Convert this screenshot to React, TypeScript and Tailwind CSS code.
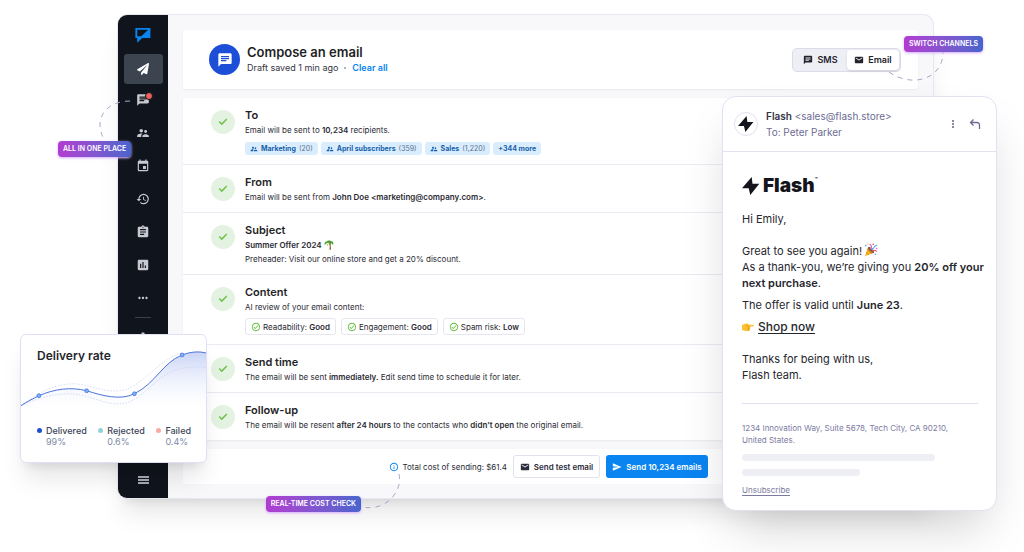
import type { ReactNode } from 'react'
import { Check } from 'lucide-react'
import { FaPaperPlane } from 'react-icons/fa'
import {
  MdAssessment,
  MdAssignment,
  MdChat,
  MdEmail,
  MdEvent,
  MdHistory,
  MdMoreHoriz,
  MdMoreVert,
  MdOutlineCheckCircle,
  MdOutlineInfo,
  MdSend,
  MdSettings,
  MdSupervisorAccount,
} from 'react-icons/md'

const navItems = [
  { label: 'Chats', icon: MdChat, hasDot: true },
  { label: 'Contacts', icon: MdSupervisorAccount },
  { label: 'Calendar', icon: MdEvent },
  { label: 'History', icon: MdHistory },
  { label: 'Templates', icon: MdAssignment },
  { label: 'Reports', icon: MdAssessment },
  { label: 'More', icon: MdMoreHoriz },
]

const recipients = [
  { name: 'Marketing', count: '20' },
  { name: 'April subscribers', count: '359' },
  { name: 'Sales', count: '1,220' },
]

const reviewChecks = [
  { label: 'Readability', value: 'Good' },
  { label: 'Engagement', value: 'Good' },
  { label: 'Spam risk', value: 'Low' },
]

const rates = [
  { label: 'Delivered', value: '99%', dot: 'bg-[#1d4ed8]' },
  { label: 'Rejected', value: '0.6%', dot: 'bg-[#94d3d3]' },
  { label: 'Failed', value: '0.4%', dot: 'bg-[#f9aaa5]' },
]

const ratePoints = [
  [18, 49],
  [66, 44],
  [114, 47],
  [162, 8],
]

const BrandLogo = () => (
  <svg viewBox="0 0 16 16" className="h-4 w-4" aria-hidden="true">
    <path d="M.4 1h15v10H7.2l-5 4.8V11H.4z" fill="#0a84f0" />
    <path d="M2.3 2.8h10.9L6.3 9.3h-4z" fill="#10141d" />
  </svg>
)

const Bolt = ({ className }: { className: string }) => (
  <svg viewBox="0 0 18 18" className={className} aria-hidden="true">
    <path d="M9.7 0 0 11.3h6.7L8.3 18l9-11.3h-6.8z" fill="#14141c" />
  </svg>
)

const PalmIcon = () => (
  <svg viewBox="0 0 16 16" className="h-2.5 w-2.5" aria-hidden="true">
    <path d="M8 5c1 3 1.4 6 .8 10.5h2.4C11.5 11 10.500 8 9.200 5z" fill="#a0622d" />
    <path
      d="M8.500 5C6 3.500 3 4.500 1.500 8.500 0 5.500 2 2.500 4.500 2.500 5.500.5 10 0 11.500 2c2.500 0 4.500 2.500 3 6C13 5.500 12 5 10.500 5c1.200 1.500 1 3 .5 4.500C10 7.500 9.500 6 8.500 5 7 6 6 7.500 5.500 10 4.500 8 5.500 6 8.500 5z"
      fill="#4c9a2a"
    />
  </svg>
)

const PartyIcon = () => (
  <svg viewBox="0 0 16 16" className="h-3.5 w-3.5 self-start" aria-hidden="true">
    <path d="M4.600 4.800 1 15l10.200-3.800z" fill="#fbb829" />
    <path d="m3.600 8 4.600 4.500 1.500-.6-5.600-5.600zM2.200 11.500l2.800 2.300 1.200-.4-3.600-3z" fill="#e08a1b" />
    <ellipse cx="8" cy="8" rx="1.7" ry="4.6" transform="rotate(-45 8 8)" fill="#8a5a3b" />
    <g fill="none" strokeWidth="1.2" strokeLinecap="round">
      <path d="M7.500 6.500C9 5 8.500 3 7 1.500" stroke="#d956c2" />
      <path d="M9 7.500c1-2 2-1 2.500-2.500S13 3 14.500 2.500" stroke="#4da3f5" />
      <path d="M9.500 9c1.500-1.200 3-1 5 .5" stroke="#e8475c" />
    </g>
    <circle cx="2" cy="3" r=".9" fill="#4da3f5" />
    <circle cx="10.5" cy="1.5" r=".9" fill="#e8475c" />
    <circle cx="4.5" cy="1.3" r=".7" fill="#fbb829" />
    <circle cx="14.6" cy="6.2" r=".8" fill="#d956c2" />
    <circle cx="13" cy="12.8" r=".9" fill="#4da3f5" />
  </svg>
)

const PointIcon = () => (
  <svg viewBox="0 0 16 16" className="h-3 w-3" aria-hidden="true">
    <path
      d="M0 5.500C2 4 4.500 3 7.500 3.200c1 .1 1.300 1 .8 1.800h6.500c1.600 0 1.600 2.300 0 2.300h-4.300c1 .5 1 1.800.1 2.200.7.6.6 1.600-.3 2 .4.9-.2 1.700-1.300 1.700H5C3 13.200 1.500 12.500 0 12z"
      fill="#fdc02f"
    />
    <path
      d="M10.400 7.400H7M10.500 9.600H7.300M10.200 11.500H7.500M8.300 5 6 6.200"
      stroke="#d98c1a"
      strokeWidth=".8"
      fill="none"
    />
  </svg>
)

const Callout = ({ children }: { children: ReactNode }) => (
  <span className="flex h-4 items-center justify-center rounded bg-gradient-to-r from-[#b13bd1] to-[#4664cd] px-[5px] text-[7px] font-semibold whitespace-nowrap text-white shadow-sm shadow-purple-300">
    {children}
  </span>
)

const Connector = ({ d, className, viewBox }: { d: string; className: string; viewBox: string }) => (
  <svg viewBox={viewBox} className={`pointer-events-none absolute ${className}`} aria-hidden="true">
    <path d={d} fill="none" stroke="#aaa6c6" strokeWidth="1" strokeDasharray="5 5" />
  </svg>
)

const StepRow = ({ title, children }: { title: string; children: ReactNode }) => (
  <section className="flex gap-2.5 border-b border-[#eaeaf2] px-7 py-[9px] last:border-b-0">
    <span className="mt-[3px] flex h-6 w-6 shrink-0 items-center justify-center rounded-full bg-[#e4f3e1]">
      <Check className="h-2.5 w-2.5 text-[#77c157]" strokeWidth={4} />
    </span>
    <div className="text-[8px] leading-3 text-[#2b2b34]">
      <h2 className="mb-px text-[11px] leading-4 font-semibold text-[#1f1f26]">{title}</h2>
      {children}
    </div>
  </section>
)

const Sidebar = () => (
  <nav className="flex w-[50px] shrink-0 flex-col items-center rounded-l-[9px] bg-[#10141d] pt-3 pb-3.5 text-[#c9c9d1]">
    <BrandLogo />
    <button
      type="button"
      aria-label="Campaigns"
      className="mt-[11px] flex h-[30px] w-[39px] items-center justify-center rounded-[3px] bg-[#3c444f] text-white"
    >
      <FaPaperPlane className="h-3 w-3" />
    </button>
    <div className="flex h-[230px] flex-col">
      {navItems.map(({ label, icon: Icon, hasDot }) => (
        <button
          key={label}
          type="button"
          aria-label={label}
          className="relative flex w-[39px] flex-1 items-center justify-center"
        >
          <Icon className="h-3.5 w-3.5" />
          {hasDot && (
            <span className="absolute top-2 right-2.5 h-2 w-2 rounded-full border border-[#10141d] bg-[#f1625c]" />
          )}
        </button>
      ))}
    </div>
    <span className="mt-[3px] h-px w-4 shrink-0 bg-[#3a3f4a]" />
    <button type="button" aria-label="Settings" className="mt-[13px]">
      <MdSettings className="h-3.5 w-3.5" />
    </button>
    <button type="button" aria-label="Menu" className="mt-auto flex flex-col gap-px">
      <span className="h-0.5 w-[11px] bg-[#a9a9b2]" />
      <span className="h-0.5 w-[11px] bg-[#a9a9b2]" />
      <span className="h-0.5 w-[11px] bg-[#a9a9b2]" />
    </button>
  </nav>
)

const ComposeHeader = () => (
  <header className="flex items-center rounded-[3px] bg-white py-3.5 pr-[17px] pl-[26px] shadow-sm shadow-black/5">
    <span className="flex h-[31px] w-[31px] items-center justify-center rounded-full bg-[#1d4ed8] text-white">
      <MdChat className="h-4 w-4" />
    </span>
    <div className="ml-[7px] grow">
      <h1 className="text-[13px] leading-4 font-semibold text-[#1f1f26]">Compose an email</h1>
      <p className="flex items-center text-[9px] leading-[15px] text-[#35353f]">
        Draft saved 1 min ago
        <span className="mx-1.5 h-0.5 w-0.5 rounded-full bg-[#9a9ab4]" />
        <a href="#clear" className="font-semibold text-[#0a84f0]">
          Clear all
        </a>
      </p>
    </div>
    <div className="flex h-6 rounded-[5px] border border-[#dcdbea] bg-[#eeeef5] p-px text-[9px] font-semibold text-[#24242e]">
      <button type="button" aria-pressed="false" className="flex w-[53px] items-center justify-center gap-1">
        <MdChat className="h-2.5 w-2.5" />
        SMS
      </button>
      <button
        type="button"
        aria-pressed="true"
        className="flex w-[52px] items-center justify-center gap-1 rounded bg-white shadow-sm"
      >
        <MdEmail className="h-2.5 w-2.5" />
        Email
      </button>
    </div>
  </header>
)

const ComposeSteps = () => (
  <div className="mt-[9px] rounded-[3px] bg-white shadow-sm shadow-black/5">
    <StepRow title="To">
      <p>
        Email will be sent to <b className="font-semibold">10,234</b> recipients.
      </p>
      <ul className="mt-1.5 flex gap-[3px] text-[7px] text-[#185fa8]">
        {recipients.map(({ name, count }) => (
          <li key={name} className="flex h-[13px] items-center rounded-[3px] bg-[#d9edff] px-[5px]">
            <MdSupervisorAccount className="mr-[3px] h-2 w-2" />
            <b className="font-bold">{name}</b>
            <span className="ml-[3px] text-[#5c718c]">({count})</span>
          </li>
        ))}
        <li className="flex h-[13px] items-center rounded-[3px] bg-[#d9edff] px-[5px] font-bold">+344 more</li>
      </ul>
    </StepRow>
    <StepRow title="From">
      <p>
        Email will be sent from <b className="font-semibold">John Doe &lt;marketing@company.com&gt;</b>.
      </p>
    </StepRow>
    <StepRow title="Subject">
      <p className="flex items-center gap-0.5 font-semibold">
        Summer Offer 2024 <PalmIcon />
      </p>
      <p className="mt-0.5">Preheader: Visit our online store and get a 20% discount.</p>
    </StepRow>
    <StepRow title="Content">
      <p>AI review of your email content:</p>
      <ul className="mt-[5px] flex gap-[5px]">
        {reviewChecks.map(({ label, value }) => (
          <li key={label} className="flex h-[17px] items-center rounded-[3px] border border-[#e6e6f0] px-[5px]">
            <MdOutlineCheckCircle className="mr-0.5 h-2.5 w-2.5 text-[#62bd3f]" />
            <span>
              {label}: <b className="font-semibold">{value}</b>
            </span>
          </li>
        ))}
      </ul>
    </StepRow>
    <StepRow title="Send time">
      <p>
        The email will be sent <b className="font-semibold">immediately.</b> Edit send time to schedule it for later.
      </p>
    </StepRow>
    <StepRow title="Follow-up">
      <p>
        The email will be resent <b className="font-semibold">after 24 hours</b> to the contacts who{' '}
        <b className="font-semibold">didn't open</b> the original email.
      </p>
    </StepRow>
  </div>
)

const SendBar = () => (
  <footer className="mt-[9px] flex items-center justify-end rounded-[3px] bg-white py-1.5 pr-[210px] text-[8px] text-[#2b2b34]">
    <MdOutlineInfo className="mr-[3px] h-2.5 w-2.5 text-[#0a84f0]" />
    <span>Total cost of sending: $61.4</span>
    <button
      type="button"
      className="ml-1.5 flex h-[23px] w-[87px] items-center justify-center gap-1 rounded-[3px] border border-[#e2e1ef] bg-white font-semibold text-[#2c2c3c]"
    >
      <MdEmail className="h-2.5 w-2.5" />
      Send test email
    </button>
    <button
      type="button"
      className="ml-1.5 flex h-[23px] w-[102px] items-center justify-center gap-1 rounded-[3px] bg-[#0a84f0] font-semibold text-white"
    >
      <MdSend className="h-2.5 w-2.5" />
      Send 10,234 emails
    </button>
  </footer>
)

const EmailPreview = () => (
  <article className="absolute top-24 right-[27px] w-[275px] rounded-[14px] border border-[#e3e1f1] bg-white shadow-2xl shadow-black/20">
    <header className="flex h-[55px] items-center border-b border-[#e3e1f1] pr-[15px] pl-[11px] text-[#6d6c93]">
      <span className="flex h-6 w-6 items-center justify-center rounded-full border border-[#e3e1f1]">
        <Bolt className="h-4 w-4" />
      </span>
      <div className="ml-2 grow text-[10px] leading-4">
        <p>
          <b className="font-semibold text-[#35344a]">Flash</b> &lt;sales@flash.store&gt;
        </p>
        <p>To: Peter Parker</p>
      </div>
      <button type="button" aria-label="More options">
        <MdMoreVert className="h-3 w-3" />
      </button>
      <button type="button" aria-label="Reply" className="ml-2.5">
        <svg viewBox="0 0 12 12" className="h-3 w-3" aria-hidden="true">
          <path
            d="m4.500 1.500-3 3 3 3m-3-3H8A2.500 2.500 0 0 1 10.500 7v4"
            fill="none"
            stroke="currentColor"
            strokeWidth="1.3"
          />
        </svg>
      </button>
    </header>
    <div className="pt-[25px] pr-2.5 pb-3.5 pl-[19px] text-[11px] leading-4 text-[#26262e]">
      <div className="flex items-center gap-[3px]">
        <Bolt className="h-[18px] w-[18px]" />
        <span className="text-[19px] leading-[18px] font-black text-[#14141c]">Flash</span>
        <span className="-ml-[3px] self-start text-[5px] leading-[5px] font-bold">™</span>
      </div>
      <p className="mt-4">Hi Emily,</p>
      <p className="mt-4 flex items-center gap-0.5">
        Great to see you again! <PartyIcon />
      </p>
      <p>
        As a thank-you, we’re giving you <b className="font-semibold">20% off your</b>
        <br />
        <b className="font-semibold">next purchase</b>.
      </p>
      <p className="mt-1.5">
        The offer is valid until <b className="font-semibold">June 23</b>.
      </p>
      <p className="mt-1.5 flex items-center gap-1">
        <PointIcon />
        <a href="#shop" className="text-xs leading-4 font-medium underline underline-offset-2">
          Shop now
        </a>
      </p>
      <p className="mt-4">Thanks for being with us,</p>
      <p>Flash team.</p>
      <hr className="mt-5 mr-2 border-[#e3e1f1]" />
      <p className="mt-[18px] text-[8px] leading-3 text-[#7c7b9f]">
        1234 Innovation Way, Suite 5678, Tech City, CA 90210,
        <br />
        United States.
      </p>
      <div className="mt-2 h-[7px] w-[193px] rounded-full bg-[#eeeef5]" />
      <div className="mt-2 h-[7px] w-[118px] rounded-full bg-[#eeeef5]" />
      <a href="#unsubscribe" className="mt-2 block text-[8px] leading-3 text-[#7c7b9f] underline underline-offset-2">
        Unsubscribe
      </a>
    </div>
  </article>
)

const DeliveryRate = () => (
  <section className="absolute top-[334px] left-5 w-[187px] rounded-md border border-[#dfdff6] bg-white pt-3 pb-[15px] shadow-xl shadow-black/10">
    <h2 className="px-4 text-xs leading-[18px] font-semibold text-[#26262e]">Delivery rate</h2>
    <svg viewBox="0 0 186 68" className="-mt-[18px] block w-full" role="img" aria-label="Delivery rate over time">
      <defs>
        <linearGradient id="rate-fill" x1="0" y1="0" x2="0" y2="1">
          <stop offset="0" stopColor="#c9d4f6" />
          <stop offset="1" stopColor="#ffffff" stopOpacity="0" />
        </linearGradient>
      </defs>
      <path
        d="M0 59C6 55 12 52 18 49 34 42 50 40 66 44c16 5 34 10 48 3 22-11 28-31 48-39 8-3 16-4 24-2v62H0z"
        fill="url(#rate-fill)"
      />
      <g fill="none" stroke="#c3cdf0" strokeWidth=".7" strokeDasharray="1.5 1.5">
        <path d="M0 59C18 45 36 37 52 37c16 0 30 9 47 7 24-3 38-32 63-38" />
        <path d="M0 59c18-8 34-12 49-12 17 0 34 11 50 10 28-1 34-37 77-37 4 0 7 0 10 1" />
      </g>
      <path
        d="M0 59C6 55 12 52 18 49 34 42 50 40 66 44c16 5 34 10 48 3 22-11 28-31 48-39 8-3 16-4 24-2"
        fill="none"
        stroke="#4a72de"
        strokeWidth="1"
      />
      {ratePoints.map(([cx, cy]) => (
        <circle key={cx} cx={cx} cy={cy} r="1.9" fill="#7fb4f8" stroke="#3f6fe0" strokeWidth=".8" />
      ))}
    </svg>
    <ul className="mt-2.5 flex justify-between pr-[15px] pl-4">
      {rates.map(({ label, value, dot }) => (
        <li key={label} className="flex gap-1 text-[9px] leading-[11px]">
          <span className={`mt-[3px] h-[5px] w-[5px] rounded-full ${dot}`} />
          <div>
            <p className="font-medium text-[#3b4558]">{label}</p>
            <p className="text-[#7c8aa5]">{value}</p>
          </div>
        </li>
      ))}
    </ul>
  </section>
)

export default function App() {
  return (
    <div className="relative min-h-screen overflow-hidden bg-white pt-[15px] pr-[91px] pb-[53px] pl-[118px] font-['Inter',sans-serif]">
      <div className="flex rounded-[10px] bg-[#f8f8fb] shadow-xl ring-1 shadow-black/10 ring-[#e8e8f0]">
        <Sidebar />
        <main className="grow px-[15px] pt-[15px] pb-3.5">
          <ComposeHeader />
          <ComposeSteps />
          <SendBar />
        </main>
      </div>

      <EmailPreview />
      <DeliveryRate />

      <Connector
        d="M32 2C14 2 2 12 2 26c0 6 2 11 5 16"
        viewBox="0 0 34 42"
        className="top-[99px] left-[98px] h-[42px] w-[34px]"
      />
      <div className="absolute top-[141px] left-[58px]">
        <Callout>ALL IN ONE PLACE</Callout>
      </div>

      <Connector
        d="M2 2c22 16 54 8 54-20"
        viewBox="0 -20 58 34"
        className="top-[50px] right-[79px] h-[34px] w-[58px]"
      />
      <div className="absolute top-9 right-[41px]">
        <Callout>SWITCH CHANNELS</Callout>
      </div>

      <Connector
        d="M37 0c4 16-12 38-37 33"
        viewBox="0 0 40 36"
        className="top-[474px] right-[622px] h-9 w-10"
      />
      <div className="absolute top-[496px] right-[663px]">
        <Callout>REAL-TIME COST CHECK</Callout>
      </div>
    </div>
  )
}
